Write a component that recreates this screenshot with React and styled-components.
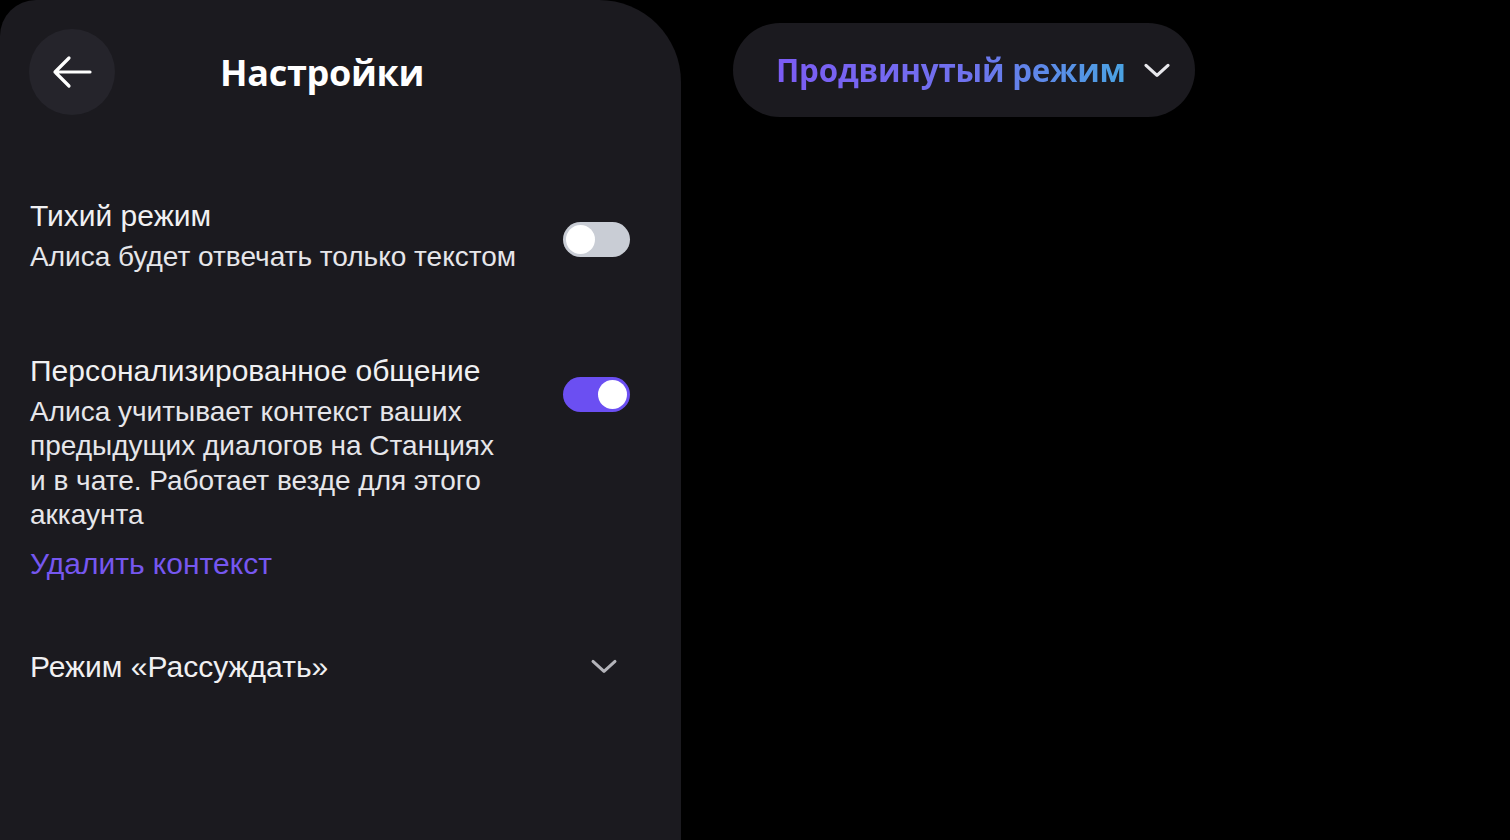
import styled, { createGlobalStyle } from 'styled-components';

const GlobalStyle = createGlobalStyle`
	html, body {
		margin: 0;
		padding: 0;
		background: #000;
	}
	#root {
		min-height: 100vh;
	}
`;

const Page = styled.div`
	display: flex;
	align-items: flex-start;
	min-height: 100vh;
	background: #000;
`;

const Panel = styled.aside`
	box-sizing: border-box;
	width: 681px;
	height: 840px;
	flex-shrink: 0;
	background: #1b1a1f;
	border-radius: 36px 82px 0 0;
	padding: 29px 51px 0 29px;
	font-family: 'Liberation Sans', Arial, sans-serif;
	color: #ececef;
`;

const Header = styled.div`
	display: flex;
	align-items: center;
	gap: 105px;
	margin-bottom: 84px;
`;

const BackButton = styled.button`
	width: 86px;
	height: 86px;
	border-radius: 50%;
	border: none;
	background: #25242b;
	color: #fff;
	display: flex;
	align-items: center;
	justify-content: center;
	padding: 0;
	cursor: pointer;
`;

const Title = styled.h1`
	margin: 0;
	font-family: 'Open Sans', Inter, sans-serif;
	font-weight: 700;
	font-size: 36px;
	color: #fff;
	letter-spacing: -0.3px;
`;

const Section = styled.div`
	display: flex;
	align-items: flex-start;
	justify-content: space-between;
	padding-left: 1px;
	margin-bottom: ${(p) => p.$gap || 0}px;
`;

const TextBlock = styled.div`
	max-width: 496px;
`;

const Label = styled.div`
	font-size: 30px;
	line-height: 34px;
	color: #f0f0f2;
	margin-bottom: ${(p) => (p.$spaced ? 7 : 0)}px;
`;

const Hint = styled.div`
	font-size: 28px;
	line-height: 34.5px;
	color: #e6e6ea;
`;

const LinkButton = styled.a`
	display: block;
	margin-top: 14px;
	font-size: 30px;
	line-height: 34px;
	color: #7657f0;
	cursor: pointer;
`;

const Toggle = styled.div`
	position: relative;
	width: 67px;
	height: 35px;
	border-radius: 18px;
	margin-top: 23px;
	flex-shrink: 0;
	background: ${(p) => (p.$on ? '#6b4ff2' : '#c9cdd5')};

	&::after {
		content: '';
		position: absolute;
		top: 3px;
		left: ${(p) => (p.$on ? '35px' : '3px')};
		width: 29px;
		height: 29px;
		border-radius: 50%;
		background: #fff;
	}
`;

const Expander = styled.div`
	display: flex;
	align-items: center;
	justify-content: space-between;
	padding: 0 12px 0 1px;
	font-size: 30px;
	line-height: 34px;
	color: #f0f0f2;
`;

const Main = styled.main`
	padding: 23px 0 0 52px;
`;

const ModePill = styled.button`
	display: flex;
	align-items: center;
	gap: 17px;
	height: 94px;
	padding: 0 24px 0 43px;
	border: none;
	border-radius: 47px;
	background: #1b1a1f;
	cursor: pointer;
`;

const ModeText = styled.span`
	font-family: 'Open Sans', Inter, sans-serif;
	font-weight: 700;
	font-size: 31.3px;
	letter-spacing: -0.2px;
	background: linear-gradient(90deg, #7c5cf4 0%, #6f72ee 55%, #4aa3e2 100%);
	-webkit-background-clip: text;
	background-clip: text;
	color: transparent;
`;

const Chevron = ({ color = '#fff', size = 28, width = 3 }) => (
	<svg width={size} height={size * 0.6} viewBox="0 0 28 16" fill="none">
		<path d="M3 3l11 10L25 3" stroke={color} strokeWidth={width} strokeLinecap="round" strokeLinejoin="round" />
	</svg>
);

export default function App() {
	return (
		<>
			<GlobalStyle />
			<Page>
				<Panel>
					<Header>
						<BackButton aria-label="Назад">
							<svg width="44" height="36" viewBox="0 0 44 36" fill="none">
								<path d="M40 18H5M19 4L5 18l14 14" stroke="#fff" strokeWidth="3.2" strokeLinecap="round" strokeLinejoin="round" />
							</svg>
						</BackButton>
						<Title>Настройки</Title>
					</Header>

					<Section $gap={79}>
						<TextBlock>
							<Label $spaced>Тихий режим</Label>
							<Hint>Алиса будет отвечать только текстом</Hint>
						</TextBlock>
						<Toggle />
					</Section>

					<Section $gap={69}>
						<TextBlock>
							<Label $spaced>Персонализированное общение</Label>
							<Hint>
								Алиса учитывает контекст ваших предыдущих диалогов на Станциях и&nbsp;в&nbsp;чате. Работает везде для этого аккаунта
							</Hint>
							<LinkButton>Удалить контекст</LinkButton>
						</TextBlock>
						<Toggle $on />
					</Section>

					<Expander>
						<span>Режим «Рассуждать»</span>
						<Chevron color="#b4b4ba" size={28} width={3} />
					</Expander>
				</Panel>

				<Main>
					<ModePill>
						<ModeText>Продвинутый режим</ModeText>
						<Chevron color="#e8e8ec" size={28} width={3.2} />
					</ModePill>
				</Main>
			</Page>
		</>
	);
}
